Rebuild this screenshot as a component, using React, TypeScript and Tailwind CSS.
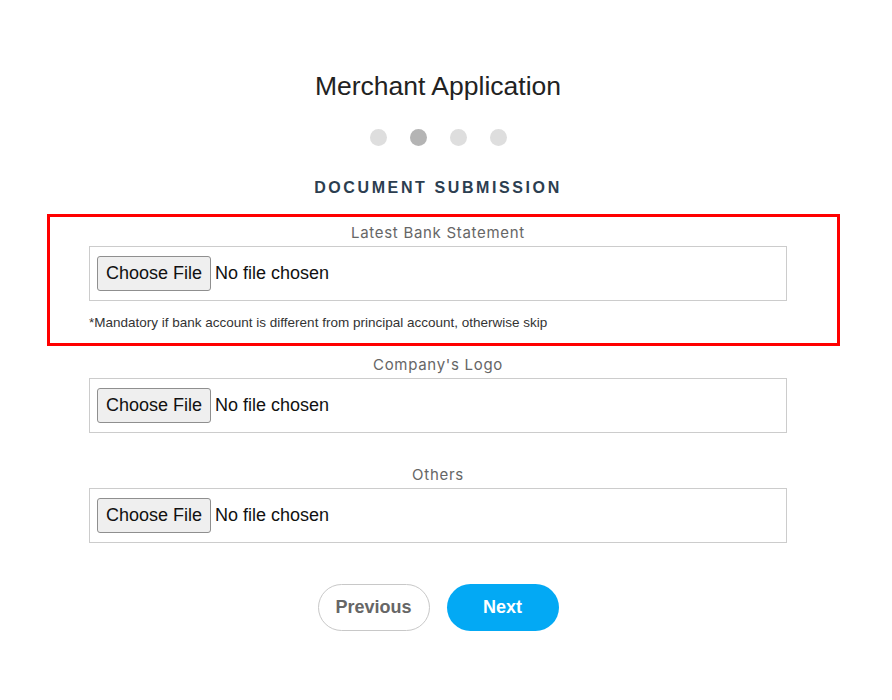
import React from "react";

const steps = [false, true, false, false];

function FileField({ label, helper }: { label: string; helper?: string }) {
  return (
    <div className="flex flex-col">
      <label className="text-center text-[15px] leading-[20px] tracking-[0.7px] text-[#666] font-['Inter',sans-serif]">
        {label}
      </label>
      <div className="mt-[3px] h-[55px] border border-[#ccc] bg-white flex items-center px-[7px]">
        <button
          type="button"
          className="h-[35px] px-[8px] border border-[#8f8f8f] rounded-[3px] bg-[#efefef] text-[18px] text-[#111] font-['Liberation_Sans',Arial,sans-serif]"
        >
          Choose File
        </button>
        <span className="ml-[4px] text-[18px] text-[#111] font-['Liberation_Sans',Arial,sans-serif]">
          No file chosen
        </span>
      </div>
      {helper && (
        <p className="mt-[13px] text-[13.5px] leading-[17px] text-[#333] font-['Liberation_Sans',Arial,sans-serif]">
          {helper}
        </p>
      )}
    </div>
  );
}

export default function App() {
  return (
    <div className="w-[876px] min-h-[700px] bg-white pt-[71px] font-['Liberation_Sans',Arial,sans-serif]">
      <h1 className="text-center text-[26.5px] leading-[30px] text-[#222]">
        Merchant Application
      </h1>
      <div className="mt-[28px] flex justify-center gap-[23px]">
        {steps.map((active, i) => (
          <span
            key={i}
            className={`block w-[17px] h-[17px] rounded-full ${
              active ? "bg-[#b4b4b4]" : "bg-[#dedede]"
            }`}
          />
        ))}
      </div>
      <h2 className="mt-[32px] text-center text-[16px] leading-[20px] font-bold tracking-[2.6px] text-[#2c3e50]">
        DOCUMENT SUBMISSION
      </h2>

      <div className="mx-auto mt-[16px] w-[698px] flex flex-col">
        <div className="ml-[-42px] mr-[-53px] border-[3px] border-[#ff0000] pt-[6px] pb-[12px] pl-[39px] pr-[50px]">
          <FileField
            label="Latest Bank Statement"
            helper="*Mandatory if bank account is different from principal account, otherwise skip"
          />
        </div>
        <div className="mt-[9px]">
          <FileField label="Company's Logo" />
        </div>
        <div className="mt-[32px]">
          <FileField label="Others" />
        </div>

        <div className="mt-[41px] flex justify-center gap-[17px]">
          <button
            type="button"
            className="w-[112px] h-[47px] rounded-full border border-[#c8c8c8] bg-white text-[18px] font-bold text-[#666]"
          >
            Previous
          </button>
          <button
            type="button"
            className="w-[112px] h-[47px] rounded-full bg-[#03a9f4] text-[18px] font-bold text-white"
          >
            Next
          </button>
        </div>
      </div>
    </div>
  );
}
